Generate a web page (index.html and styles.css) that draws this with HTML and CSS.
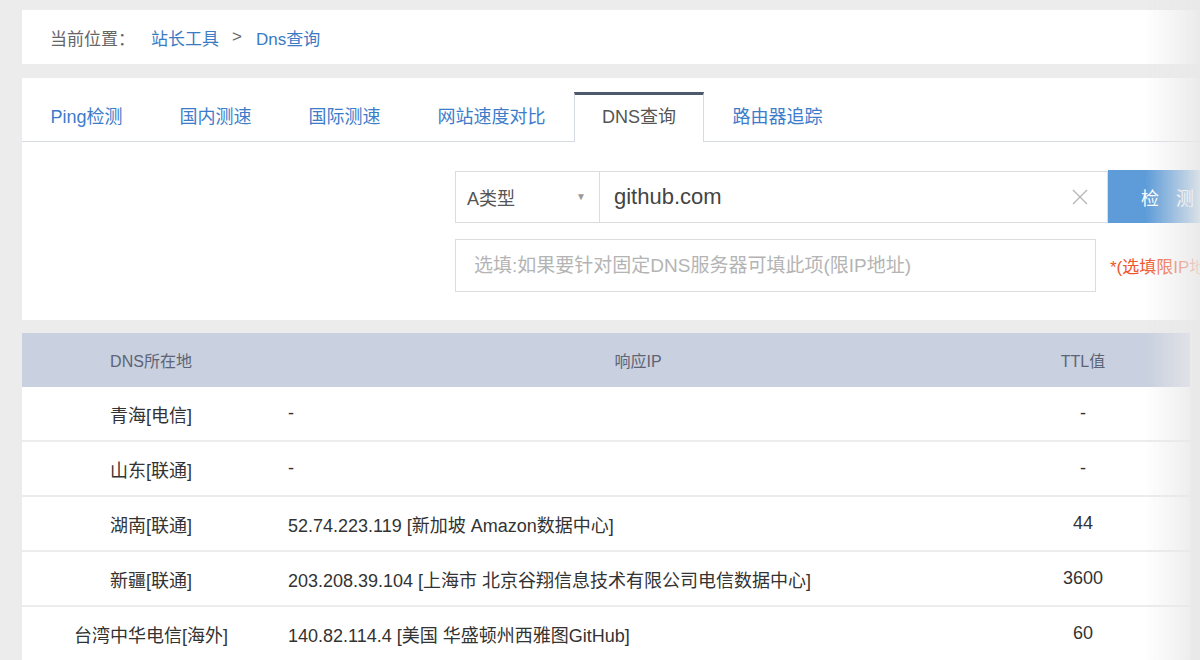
FILE: index.html
```html
<!DOCTYPE html>
<html lang="zh-CN">
<head>
    <meta charset="UTF-8">
    <meta name="viewport" content="width=device-width, initial-scale=1.0">
    <title>Dns查询 - 站长工具</title>
    <link rel="stylesheet" href="styles.css">
</head>
<body>
    <div class="page">
        <div class="panel crumbs">
            <span class="crumbs-label">当前位置：</span>
            <a href="#">站长工具</a>
            <span class="crumbs-sep">&gt;</span>
            <a href="#">Dns查询</a>
        </div>

        <div class="panel tool">
            <ul class="tabs">
                <li><a href="#">Ping检测</a></li>
                <li><a href="#">国内测速</a></li>
                <li><a href="#">国际测速</a></li>
                <li><a href="#">网站速度对比</a></li>
                <li class="active"><a href="#">DNS查询</a></li>
                <li><a href="#">路由器追踪</a></li>
            </ul>

            <form class="query">
                <div class="query-row">
                    <div class="type-select">
                        <span>A类型</span>
                        <span class="caret">▼</span>
                    </div>
                    <div class="host-box">
                        <input class="host-input" type="text" value="github.com">
                        <span class="clear">
                            <svg width="18" height="18" viewBox="0 0 18 18">
                                <path d="M2 2 L16 16 M16 2 L2 16" stroke="#b5b5b5" stroke-width="1.3" fill="none"/>
                            </svg>
                        </span>
                    </div>
                    <button type="button" class="check-btn">检 测</button>
                </div>
                <div class="query-row">
                    <input class="dns-input" type="text" placeholder="选填:如果要针对固定DNS服务器可填此项(限IP地址)">
                    <span class="note">*(选填限IP地址)</span>
                </div>
            </form>
        </div>

        <table class="result">
            <colgroup>
                <col class="col-loc">
                <col class="col-ip">
                <col class="col-ttl">
            </colgroup>
            <thead>
                <tr>
                    <th>DNS所在地</th>
                    <th>响应IP</th>
                    <th class="ttl">TTL值</th>
                </tr>
            </thead>
            <tbody>
                <tr>
                    <td>青海[电信]</td>
                    <td class="ip">-</td>
                    <td class="ttl">-</td>
                </tr>
                <tr>
                    <td>山东[联通]</td>
                    <td class="ip">-</td>
                    <td class="ttl">-</td>
                </tr>
                <tr>
                    <td>湖南[联通]</td>
                    <td class="ip">52.74.223.119 [新加坡 Amazon数据中心]</td>
                    <td class="ttl">44</td>
                </tr>
                <tr>
                    <td>新疆[联通]</td>
                    <td class="ip">203.208.39.104 [上海市 北京谷翔信息技术有限公司电信数据中心]</td>
                    <td class="ttl">3600</td>
                </tr>
                <tr>
                    <td>台湾中华电信[海外]</td>
                    <td class="ip">140.82.114.4 [美国 华盛顿州西雅图GitHub]</td>
                    <td class="ttl">60</td>
                </tr>
            </tbody>
        </table>
    </div>

    <div class="edge-fade"></div>
</body>
</html>
```

FILE: styles.css
```css
html, body {
    margin: 0;
    padding: 0;
    overflow: hidden;
}

body {
    font-family: "Liberation Sans", "Noto Sans CJK SC", sans-serif;
    background: #ececec;
    color: #333;
    width: 1200px;
    height: 660px;
}

a {
    text-decoration: none;
    color: #3b7bc4;
}

.page {
    padding: 10px 0 0 22px;
}

.panel {
    background: #fff;
    width: 1240px;
}

/* fil d'ariane */
.crumbs {
    height: 54px;
    display: flex;
    align-items: center;
    padding-left: 28px;
    box-sizing: border-box;
    font-size: 17px;
}

.crumbs-label {
    color: #666;
    margin-right: 16px;
}

.crumbs-sep {
    color: #666;
    margin: 0 14px 0 13px;
}

/* onglets + formulaire */
.tool {
    margin-top: 14px;
    height: 242px;
    padding-top: 14px;
    box-sizing: border-box;
}

.tabs {
    list-style: none;
    margin: 0;
    padding: 0;
    display: flex;
    border-bottom: 1px solid #d6dae3;
    height: 49px;
}

.tabs li {
    height: 49px;
    box-sizing: border-box;
    border-top: 3px solid transparent;
}

.tabs li a {
    display: block;
    padding: 0 28.5px;
    line-height: 45px;
    font-size: 18px;
    color: #3d7cc9;
}

.tabs li.active {
    border-top-color: #4d5a6d;
    border-left: 1px solid #d6dae3;
    border-right: 1px solid #d6dae3;
    background: #fff;
    height: 50px;
}

.tabs li.active a {
    color: #555;
    padding: 0 27px;
}

.query {
    margin: 28px 0 0 433px;
}

.query-row {
    display: flex;
    align-items: center;
}

.query-row + .query-row {
    margin-top: 16px;
}

.type-select {
    width: 144px;
    height: 52px;
    box-sizing: border-box;
    border: 1px solid #dcdcdc;
    border-right: none;
    display: flex;
    align-items: center;
    justify-content: space-between;
    padding: 0 13px 0 11px;
    font-size: 18px;
    color: #555;
}

.caret {
    font-size: 10px;
    color: #999;
}

.host-box {
    width: 509px;
    height: 52px;
    box-sizing: border-box;
    border: 1px solid #dcdcdc;
    display: flex;
    align-items: center;
}

.host-input {
    flex: 1;
    border: none;
    outline: none;
    padding: 0 0 0 14px;
    font-family: inherit;
    font-size: 22px;
    color: #444;
}

.clear {
    display: flex;
    width: 18px;
    margin-right: 18px;
}

.check-btn {
    width: 140px;
    height: 53px;
    border: none;
    background: #5d9cd9;
    color: #fff;
    font-family: inherit;
    font-size: 18px;
    letter-spacing: 6px;
    text-align: left;
    padding-left: 33px;
}

.dns-input {
    width: 641px;
    height: 53px;
    box-sizing: border-box;
    border: 1px solid #dcdcdc;
    padding: 0 18px;
    font-family: inherit;
    font-size: 19px;
    outline: none;
}

.dns-input::placeholder {
    color: #b4b4b4;
}

.note {
    margin-left: 14px;
    color: #f0552c;
    font-size: 17px;
    white-space: nowrap;
}

/* tableau des resultats */
.result {
    margin-top: 13px;
    width: 1168px;
    border-collapse: collapse;
    table-layout: fixed;
    background: #fff;
    font-size: 18px;
}

.col-loc { width: 258px; }
.col-ip { width: 716px; }

.result th {
    background: #c9d0df;
    color: #5c6475;
    font-weight: normal;
    font-size: 16px;
    height: 54px;
    padding: 0;
}

.result td {
    height: 53px;
    padding: 0;
    border-bottom: 2px solid #ececec;
    text-align: center;
    color: #333;
}

.result td.ip {
    text-align: left;
    padding-left: 8px;
}

.result .ttl {
    padding-right: 20px;
}

.edge-fade {
    position: fixed;
    top: 0;
    right: 0;
    width: 55px;
    height: 100%;
    background: linear-gradient(to right, rgba(236, 236, 236, 0), rgba(232, 232, 232, 0.9));
    pointer-events: none;
}
```
